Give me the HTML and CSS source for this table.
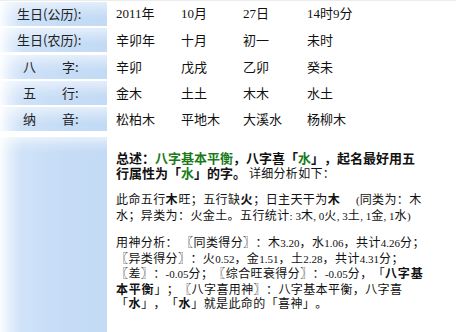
FILE: index.html
```html
<!DOCTYPE html>
<html lang="zh-CN">
<head>
<meta charset="utf-8">
<title>八字分析</title>
<link rel="stylesheet" href="styles.css">
</head>
<body>
<div class="topline"></div>
<div class="bazi">
  <div class="lbl">生日(公历):</div>
  <div class="val num">2011年</div>
  <div class="val num">10月</div>
  <div class="val num">27日</div>
  <div class="val num">14时9分</div>

  <div class="lbl">生日(农历):</div>
  <div class="val">辛卯年</div>
  <div class="val">十月</div>
  <div class="val">初一</div>
  <div class="val">未时</div>

  <div class="lbl sp">八　　字:</div>
  <div class="val">辛卯</div>
  <div class="val">戊戌</div>
  <div class="val">乙卯</div>
  <div class="val">癸未</div>

  <div class="lbl sp">五　　行:</div>
  <div class="val">金木</div>
  <div class="val">土土</div>
  <div class="val">木木</div>
  <div class="val">水土</div>

  <div class="lbl sp">纳　　音:</div>
  <div class="val">松柏木</div>
  <div class="val">平地木</div>
  <div class="val">大溪水</div>
  <div class="val">杨柳木</div>

  <div class="lbl big"></div>
  <div class="detail">
    <p class="summary"><b>总述：<span class="g">八字基本平衡</span>，八字喜「<span class="g">水</span>」，起名最好用五<br>行属性为「<span class="g">水</span>」的字。</b> <span class="plain">详细分析如下：</span></p>
    <p class="para">此命五行<b>木</b>旺；五行缺<b>火</b>；日主天干为<b>木</b>　 <span class="num">(</span>同类为：木<br>水；异类为：火金土。五行统计<span class="num">: 3</span>木<span class="num">, 0</span>火<span class="num">, 3</span>土<span class="num">, 1</span>金<span class="num">, 1</span>水<span class="num">)</span></p>
    <p class="para">用神分析： 〖同类得分〗：木<span class="num">3.20</span>，水<span class="num">1.06</span>，共计<span class="num">4.26</span>分；<br>〖异类得分〗：火<span class="num">0.52</span>，金<span class="num">1.51</span>，土<span class="num">2.28</span>，共计<span class="num">4.31</span>分；<br>〖差〗：<span class="num">-0.05</span>分；〖综合旺衰得分〗：<span class="num">-0.05</span>分，「<b>八字基</b><br><b>本平衡</b>」；〖八字喜用神〗：八字基本平衡，八字喜<br>「<b>水</b>」，「<b>水</b>」就是此命的「喜神」。</p>
  </div>
</div>
</body>
</html>
```
FILE: styles.css
```css
html, body {
  margin: 0;
  padding: 0;
  background: #fff;
  overflow: hidden;
}
body {
  font-family: "Noto Sans CJK SC", "Liberation Sans", sans-serif;
  color: #111;
  width: 467px;
  height: 332px;
  text-spacing-trim: space-all;
}
.topline {
  height: 1px;
  background: #ececec;
  width: 456px;
}
.bazi {
  display: grid;
  grid-template-columns: 107px 65px 62px 64px 1fr;
  grid-auto-rows: 24px;
  row-gap: 2.25px;
  padding-top: 1px;
}
.lbl {
  background:
    linear-gradient(to bottom, rgba(255,255,255,0.55) 0, rgba(255,255,255,0.15) 45%, rgba(255,255,255,0) 70%),
    linear-gradient(to right, #fbfdff 0, #e3eefb 10px, #cfe2f8 22px, #c6dcf6 60%, #c3daf5 100%);
  font-size: 13px;
  line-height: 24px;
  color: #222;
  padding-left: 17px;
  white-space: nowrap;
}
.lbl.sp {
  padding-left: 23px;
}
.lbl.big {
  height: 210px;
  background:
    linear-gradient(to bottom, rgba(255,255,255,0.6) 0, rgba(255,255,255,0.2) 8px, rgba(255,255,255,0) 16px),
    linear-gradient(to right, #fbfdff 0, #e3eefb 10px, #cfe2f8 22px, #c6dcf6 60%, #c3daf5 100%);
  margin-top: 4px;
}
.val {
  padding-left: 9px;
  font-size: 13px;
  line-height: 24px;
  color: #111;
  white-space: nowrap;
}
.num {
  font-family: "Liberation Serif", "Noto Sans CJK SC", serif;
}
.detail {
  grid-column: 2 / span 4;
  padding-left: 9px;
  padding-top: 17px;
  white-space: nowrap;
}
.detail p {
  margin: 0;
}
.summary {
  font-size: 13px;
  line-height: 15px;
}
.summary b {
  font-weight: 700;
}
.summary .plain {
  font-size: 12px;
  font-weight: 400;
  letter-spacing: 0.3px;
}
.g {
  color: #1a7a1a;
}
.para {
  font-size: 12px;
  line-height: 14.5px;
  letter-spacing: 0.4px;
  margin-top: 12px !important;
}
.para b {
  letter-spacing: 0.8px;
}
.para .num {
  font-size: 11px;
  letter-spacing: 0;
}
```
